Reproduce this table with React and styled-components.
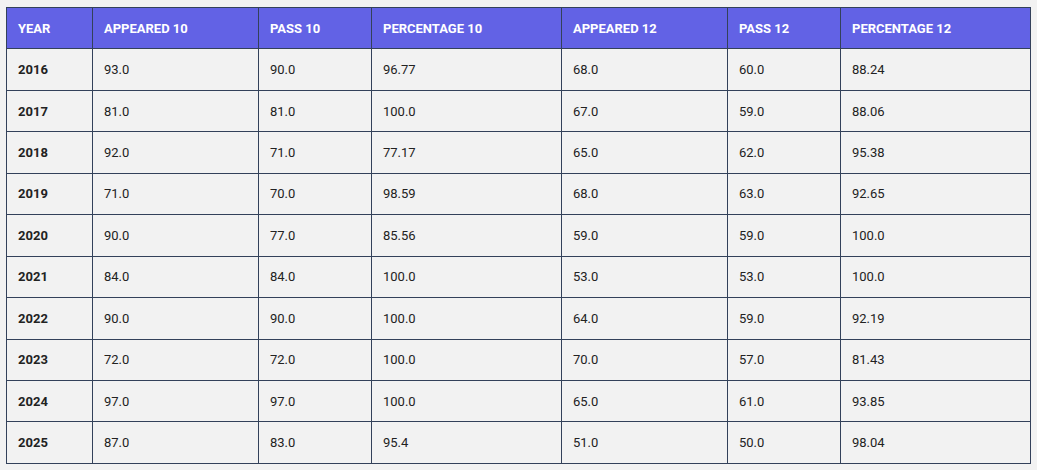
import React from 'react';
import styled, { createGlobalStyle } from 'styled-components';

const GlobalStyle = createGlobalStyle`
	html, body {
		margin: 0;
		background: #f2f2f2;
	}
	body {
		padding: 7px 7px 7px 6px;
		font-family: Roboto, "Liberation Sans", sans-serif;
	}
`;

const Table = styled.table`
	width: 1024px;
	border-collapse: collapse;
	table-layout: fixed;
	font-size: 13px;
	color: #222;
	background: #f2f2f2;
`;

const Th = styled.th`
	background: #6262e5;
	color: #fff;
	font-weight: 700;
	text-align: left;
	text-transform: uppercase;
	border: 1.5px solid #33415a;
	padding: 0 11px;
	height: 41.45px;
	box-sizing: border-box;
`;

const Td = styled.td`
	border: 1.5px solid #33415a;
	padding: 0 11px;
	height: 41.45px;
	box-sizing: border-box;
	font-weight: ${(p) => (p.$bold ? 700 : 400)};
`;

const columns = [
	['Year', 86],
	['Appeared 10', 166],
	['Pass 10', 113],
	['Percentage 10', 190],
	['Appeared 12', 166],
	['Pass 12', 113],
	['Percentage 12', 190],
];

const rows = [
	['2016', '93.0', '90.0', '96.77', '68.0', '60.0', '88.24'],
	['2017', '81.0', '81.0', '100.0', '67.0', '59.0', '88.06'],
	['2018', '92.0', '71.0', '77.17', '65.0', '62.0', '95.38'],
	['2019', '71.0', '70.0', '98.59', '68.0', '63.0', '92.65'],
	['2020', '90.0', '77.0', '85.56', '59.0', '59.0', '100.0'],
	['2021', '84.0', '84.0', '100.0', '53.0', '53.0', '100.0'],
	['2022', '90.0', '90.0', '100.0', '64.0', '59.0', '92.19'],
	['2023', '72.0', '72.0', '100.0', '70.0', '57.0', '81.43'],
	['2024', '97.0', '97.0', '100.0', '65.0', '61.0', '93.85'],
	['2025', '87.0', '83.0', '95.4', '51.0', '50.0', '98.04'],
];

export default function App() {
	return (
		<>
			<GlobalStyle />
			<Table>
				<colgroup>
					{columns.map(([name, w]) => (
						<col key={name} style={{ width: w }} />
					))}
				</colgroup>
				<thead>
					<tr>
						{columns.map(([name]) => (
							<Th key={name}>{name}</Th>
						))}
					</tr>
				</thead>
				<tbody>
					{rows.map((row) => (
						<tr key={row[0]}>
							{row.map((cell, i) => (
								<Td key={i} $bold={i === 0}>
									{cell}
								</Td>
							))}
						</tr>
					))}
				</tbody>
			</Table>
		</>
	);
}
